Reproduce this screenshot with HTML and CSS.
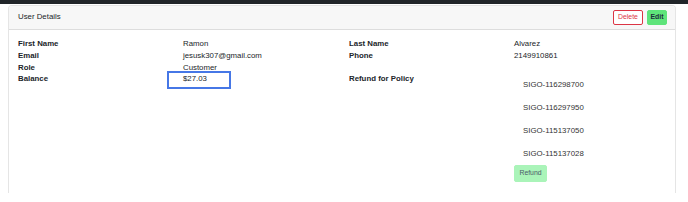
FILE: index.html
```html
<!DOCTYPE html>
<html>
<head>
<meta charset="utf-8">
<link rel="stylesheet" href="styles.css">
</head>
<body>
<div class="topbar"></div>
<div class="card">
  <div class="card-header">
    <span class="title">User Details</span>
    <div class="actions">
      <button class="btn btn-delete">Delete</button>
      <button class="btn btn-edit">Edit</button>
    </div>
  </div>
  <div class="card-body">
    <div class="label">First Name</div>
    <div class="value">Ramon</div>
    <div class="label">Last Name</div>
    <div class="value">Alvarez</div>

    <div class="label">Email</div>
    <div class="value">jesusk307@gmail.com</div>
    <div class="label">Phone</div>
    <div class="value">2149910861</div>

    <div class="label">Role</div>
    <div class="value">Customer</div>
    <div class="label"></div>
    <div class="value"></div>

    <div class="label">Balance</div>
    <div class="value balance"><span class="focus-box"></span>$27.03</div>
    <div class="label">Refund for Policy</div>
    <div class="value">
      <ul class="policies">
        <li>SIGO-116298700</li>
        <li>SIGO-116297950</li>
        <li>SIGO-115137050</li>
        <li>SIGO-115137028</li>
      </ul>
      <button class="btn btn-refund">Refund</button>
    </div>
  </div>
</div>
</body>
</html>
```

FILE: styles.css
```css
* { box-sizing: border-box; }
html, body {
  margin: 0;
  padding: 0;
  background: #fff;
  font-family: "Liberation Sans", Arial, sans-serif;
  color: #212529;
  font-size: 7.84px;
  line-height: 1.5;
}
.topbar {
  height: 4px;
  background: #212529;
}
.card {
  margin: 1px 12px 0 8px;
  border: 1px solid rgba(0,0,0,0.1);
  border-bottom: none;
  border-radius: 4px 4px 0 0;
  height: 188px;
  overflow: hidden;
}
.card-header {
  display: flex;
  align-items: center;
  justify-content: space-between;
  padding: 3px 8px 4px 9px;
  background: #f7f7f7;
  border-bottom: 1px solid rgba(0,0,0,0.1);
  height: 24px;
}
.title {
  font-size: 7.84px;
  color: #212529;
}
.actions {
  display: flex;
  gap: 4px;
}
.btn {
  font-family: inherit;
  font-size: 6.86px;
  line-height: 1.5;
  border-radius: 2px;
  cursor: pointer;
}
.btn-delete {
  height: 15px;
  width: 30px;
  padding: 0;
  background: #fff;
  color: #dc3545;
  border: 1px solid #dc3545;
}
.btn-edit {
  height: 15px;
  width: 20px;
  padding: 0;
  background: #5ee47a;
  color: #1f2d3d;
  border: 1px solid #5ee47a;
  font-weight: bold;
}
.card-body {
  display: grid;
  grid-template-columns: 165px 166px 165px 1fr;
  padding: 8px 0 8px 9px;
}
.label {
  font-weight: bold;
}
.balance {
  position: relative;
}
.focus-box {
  position: absolute;
  left: -16px;
  top: -2px;
  width: 64px;
  height: 18px;
  border: 2px solid #4677e6;
}
.policies {
  list-style: none;
  margin: 0;
  padding: 0;
}
.policies li {
  padding: 5.6px 9px;
  color: #333;
}
.btn-refund {
  height: 17px;
  width: 33px;
  padding: 0;
  background: #aaf4b9;
  border: 1px solid #aaf4b9;
  color: #4d5b6a;
  font-size: 6.86px;
}
```
